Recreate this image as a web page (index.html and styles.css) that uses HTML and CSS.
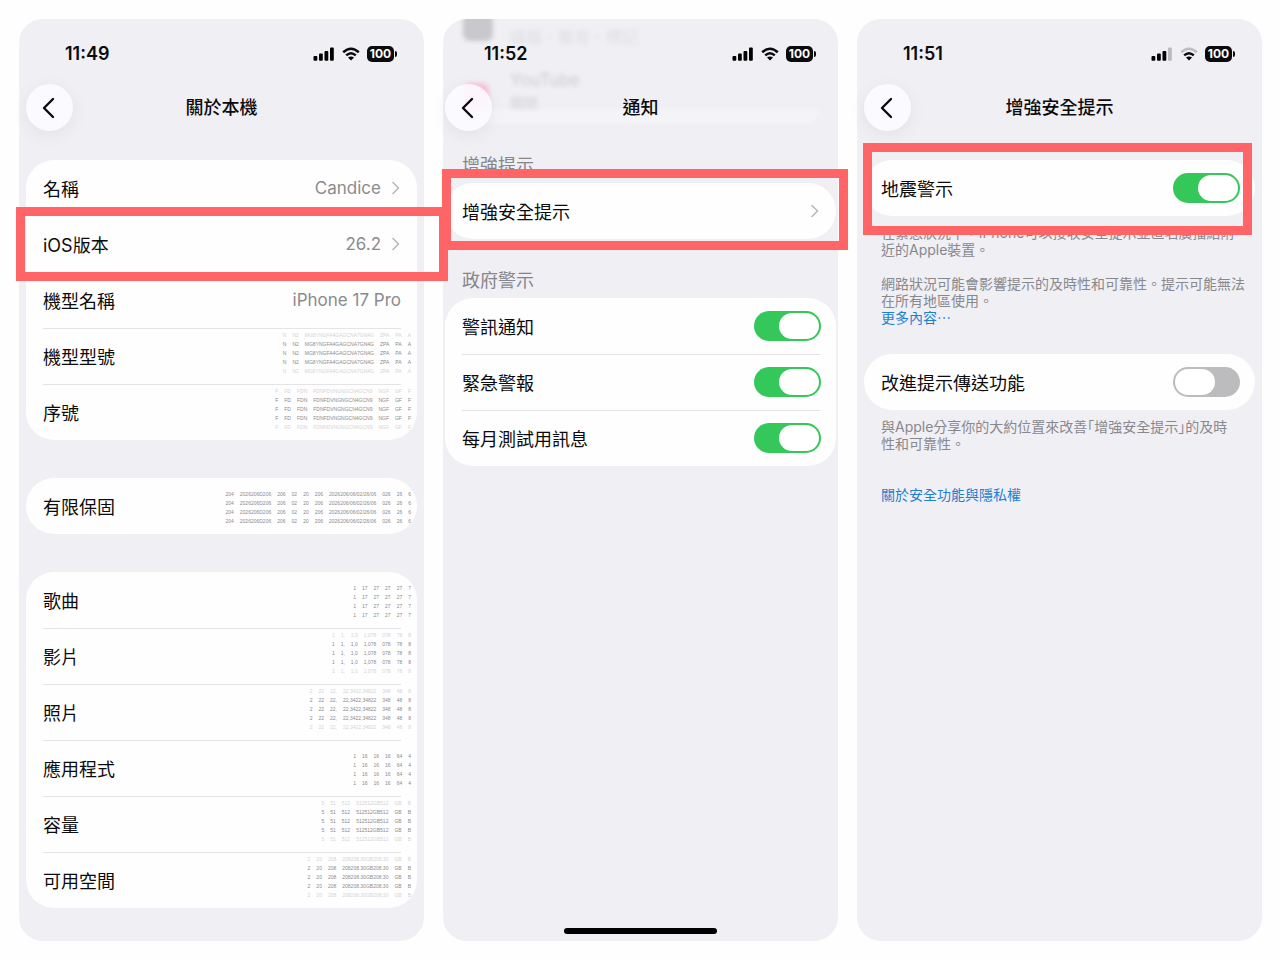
FILE: index.html
```html
<!DOCTYPE html>
<html lang="zh-Hant">
  <head>
    <meta charset="UTF-8" />
    <meta name="viewport" content="width=device-width, initial-scale=1.0" />
    <title>增強安全提示</title>
    <link rel="stylesheet" href="styles.css">
  </head>
  <body>
    <!-- shared icons -->
    <svg class="sprite" aria-hidden="true">
      <symbol id="back" viewBox="0 0 14 22">
        <path d="M12 2 L3 11 L12 20" fill="none" stroke="currentColor" stroke-width="2.4" stroke-linecap="round" stroke-linejoin="round" />
      </symbol>
      <symbol id="chevron" viewBox="0 0 8 14">
        <path d="M1 1.500 L6.500 7 L1 12.500" fill="none" stroke="currentColor" stroke-width="1.600" stroke-linecap="round" stroke-linejoin="round" />
      </symbol>
      <symbol id="signal" viewBox="0 0 22 14">
        <rect x="0.500" y="9" width="3.800" height="4.800" rx="1" />
        <rect x="6" y="6.500" width="3.800" height="7.300" rx="1" />
        <rect x="11.500" y="4" width="3.800" height="9.800" rx="1" />
        <rect x="17" y="0.500" width="3.800" height="13.300" rx="1" />
      </symbol>
      <symbol id="wifi" viewBox="0 0 18 14">
        <path d="M1.200 5.200 Q9 -1.800 16.800 5.200" fill="none" stroke="currentColor" stroke-width="2.500" />
        <path d="M4.200 8.400 Q9 4 13.800 8.400" fill="none" stroke="currentColor" stroke-width="2.500" />
        <path d="M9 13.600 L6 10.600 Q9 8.400 12 10.600 Z" />
      </symbol>
    </svg>

    <main class="screens">
      <section class="phone about">
        <div class="status-bar">
          <span class="time">11:49</span>
          <svg class="signal"><use href="#signal" /></svg>
          <svg class="wifi"><use href="#wifi" /></svg>
          <span class="battery">100</span>
        </div>
        <header class="nav">
          <button class="back" aria-label="返回"><svg><use href="#back" /></svg></button>
          <h1>關於本機</h1>
        </header>
        <div class="settings">
          <div class="card">
            <div class="row no-line">
              <span>名稱</span>
              <span class="value">Candice</span>
              <svg class="chevron"><use href="#chevron" /></svg>
            </div>
            <div class="row no-line">
              <span>iOS版本</span>
              <span class="value">26.2</span>
              <svg class="chevron"><use href="#chevron" /></svg>
              <div class="highlight"></div>
            </div>
            <div class="row">
              <span>機型名稱</span>
              <span class="value">iPhone 17 Pro</span>
            </div>
            <div class="row">
              <span>機型型號</span>
              <div class="masked"><i>N</i><i>N2</i><i>MG8YNGFA4GAGCNA7GN4G</i><i>ZPA</i><i>PA</i><i>A</i></div>
            </div>
            <div class="row">
              <span>序號</span>
              <div class="masked"><i>F</i><i>FD</i><i>FDN</i><i>FDNFDVNGNGCN4GCN9</i><i>NGF</i><i>GF</i><i>F</i></div>
            </div>
          </div>

          <div class="card">
            <div class="row">
              <span>有限保固</span>
              <div class="masked four"><i>204</i><i>2026206D206</i><i>206</i><i>02</i><i>20</i><i>206</i><i>2026206/06/02/26/06</i><i>026</i><i>26</i><i>6</i></div>
            </div>
          </div>

          <div class="card">
            <div class="row">
              <span>歌曲</span>
              <div class="masked four"><i>1</i><i>17</i><i>27</i><i>27</i><i>27</i><i>7</i></div>
            </div>
            <div class="row">
              <span>影片</span>
              <div class="masked"><i>1</i><i>1,</i><i>1,0</i><i>1,078</i><i>078</i><i>78</i><i>8</i></div>
            </div>
            <div class="row">
              <span>照片</span>
              <div class="masked"><i>2</i><i>22</i><i>22,</i><i>22,3422,34822</i><i>348</i><i>48</i><i>8</i></div>
            </div>
            <div class="row">
              <span>應用程式</span>
              <div class="masked four"><i>1</i><i>16</i><i>16</i><i>16</i><i>64</i><i>4</i></div>
            </div>
            <div class="row">
              <span>容量</span>
              <div class="masked"><i>5</i><i>51</i><i>512</i><i>512512GB512</i><i>GB</i><i>B</i></div>
            </div>
            <div class="row">
              <span>可用空間</span>
              <div class="masked"><i>2</i><i>20</i><i>208</i><i>208208.30GB208.30</i><i>GB</i><i>B</i></div>
            </div>
          </div>
        </div>
      </section>

      <section class="phone notifications">
        <!-- list scrolled under the navigation bar -->
        <div class="under" aria-hidden="true">
          <div class="app-icon"></div>
          <div class="app-icon pink"></div>
          <div class="list-end"></div>
          <p class="app-detail">橫幅、聲音、標記</p>
          <p class="app-name">YouTube</p>
          <p class="app-detail off">關閉</p>
        </div>
        <div class="status-bar">
          <span class="time">11:52</span>
          <svg class="signal"><use href="#signal" /></svg>
          <svg class="wifi"><use href="#wifi" /></svg>
          <span class="battery">100</span>
        </div>
        <header class="nav">
          <button class="back" aria-label="返回"><svg><use href="#back" /></svg></button>
          <h1>通知</h1>
        </header>
        <div class="settings">
          <h2>增強提示</h2>
          <div class="card">
            <div class="row">
              <span>增強安全提示</span>
              <svg class="chevron"><use href="#chevron" /></svg>
              <div class="highlight"></div>
            </div>
          </div>

          <h2>政府警示</h2>
          <div class="card">
            <div class="row">
              <label for="alert">警訊通知</label>
              <input type="checkbox" class="toggle" id="alert" checked />
            </div>
            <div class="row">
              <label for="emergency">緊急警報</label>
              <input type="checkbox" class="toggle" id="emergency" checked />
            </div>
            <div class="row">
              <label for="monthly">每月測試用訊息</label>
              <input type="checkbox" class="toggle" id="monthly" checked />
            </div>
          </div>
        </div>
        <div class="home-indicator"></div>
      </section>

      <section class="phone safety">
        <div class="status-bar weak">
          <span class="time">11:51</span>
          <svg class="signal" viewBox="0 0 22 14">
            <rect x="0.500" y="9" width="3.800" height="4.800" rx="1" />
            <rect x="6" y="6.500" width="3.800" height="7.300" rx="1" />
            <rect x="11.500" y="4" width="3.800" height="9.800" rx="1" />
            <rect class="outer" x="17" y="0.500" width="3.800" height="13.300" rx="1" />
          </svg>
          <svg class="wifi" viewBox="0 0 18 14">
            <path class="outer" d="M1.200 5.200 Q9 -1.800 16.800 5.200" fill="none" stroke="currentColor" stroke-width="2.500" />
            <path d="M4.200 8.400 Q9 4 13.800 8.400" fill="none" stroke="currentColor" stroke-width="2.500" />
            <path d="M9 13.600 L6 10.600 Q9 8.400 12 10.600 Z" />
          </svg>
          <span class="battery">100</span>
        </div>
        <header class="nav">
          <button class="back" aria-label="返回"><svg><use href="#back" /></svg></button>
          <h1>增強安全提示</h1>
        </header>
        <div class="settings">
          <div class="card">
            <div class="row">
              <label for="earthquake">地震警示</label>
              <input type="checkbox" class="toggle" id="earthquake" checked />
              <div class="highlight"></div>
            </div>
          </div>
          <div class="note">
            <p>在緊急狀況下，iPhone可以接收安全提示並匿名廣播給附<br />近的Apple裝置。</p>
            <p>網路狀況可能會影響提示的及時性和可靠性。提示可能無法<br />在所有地區使用。<br /><a href="#more">更多內容⋯</a></p>
          </div>

          <div class="card">
            <div class="row">
              <label for="improve">改進提示傳送功能</label>
              <input type="checkbox" class="toggle" id="improve" />
            </div>
          </div>
          <div class="note">
            <p>與Apple分享你的大約位置來改善<q>增強安全提示</q>的及時<br />性和可靠性。</p>
            <p class="privacy"><a href="#privacy">關於安全功能與隱私權</a></p>
          </div>
        </div>
      </section>
    </main>
  </body>
</html>
```

FILE: styles.css
```css
* {
  box-sizing: border-box;
}

body {
  margin: 0;
  background-color: #fefefe;
  color: #0b0b0d;
  font-family: Inter, "Noto Sans CJK TC", sans-serif;
  font-size: 18px;
}

h1,
h2,
p {
  margin: 0;
}

.sprite {
  display: none;
}

.screens {
  display: grid;
  grid-template-columns: 405fr 395fr 405fr;
  gap: 19px;
  min-height: 100vh;
  padding: 19px 18px 19px 19px;
}

.phone {
  --gutter: 7px;
  position: relative;
  display: flex;
  flex-direction: column;
  min-width: 0;
  background-color: #f0eff4;
  border-radius: 24px;
}

.notifications {
  --gutter: 2px;
}

/* Status bar */
.status-bar {
  position: relative;
  display: flex;
  align-items: center;
  gap: 7px;
  padding: 25px calc(var(--gutter) + 23px) 20px calc(var(--gutter) + 39px);
  line-height: 20px;
}

.time {
  margin-right: auto;
  font-weight: 600;
}

.signal {
  width: 22px;
  height: 14px;
}

.wifi {
  width: 18px;
  height: 14px;
}

.weak .outer {
  opacity: 0.22;
}

.battery {
  position: relative;
  width: 27px;
  height: 16px;
  border-radius: 5px;
  background-color: #0b0b0d;
  color: #fff;
  font-size: 12px;
  font-weight: 700;
  line-height: 16px;
  text-align: center;
}

.battery::after {
  content: "";
  position: absolute;
  top: 5px;
  right: -3px;
  width: 2px;
  height: 6px;
  border-radius: 0 2px 2px 0;
  background-color: #0b0b0d;
}

/* Navigation */
.nav {
  position: relative;
  display: grid;
  grid-template-columns: 47px 1fr 47px;
  align-items: center;
  padding: 0 var(--gutter);
}

.back {
  display: flex;
  align-items: center;
  justify-content: center;
  width: 47px;
  height: 47px;
  padding: 0 4px 0 0;
  border: none;
  border-radius: 50%;
  background-color: rgba(252, 251, 255, 0.9);
  box-shadow: 0 4px 18px rgba(0, 0, 0, 0.06);
  color: #0b0b0d;
  cursor: pointer;
}

.back svg {
  width: 14px;
  height: 22px;
}

h1 {
  font-size: 18px;
  font-weight: 500;
  line-height: 24px;
  text-align: center;
}

/* Lists */
.settings {
  display: flex;
  flex-direction: column;
  padding: 29px var(--gutter);
}

.notifications .settings {
  padding-top: 23px;
}

.card {
  border-radius: 28px;
  background-color: #fefefe;
}

.card + .card {
  margin-top: 38px;
}

.row {
  position: relative;
  display: flex;
  align-items: center;
  height: 56px;
  padding: 0 16px 0 17px;
}

.row:not(:last-child)::after {
  content: "";
  position: absolute;
  right: 16px;
  bottom: -1px;
  left: 17px;
  height: 1px;
  background-color: #e4e4e6;
}

.row.no-line::after {
  display: none;
}

.row > :first-child {
  margin-right: auto;
}

.value {
  color: #8b8b8e;
  font-size: 17px;
}

.chevron {
  width: 8px;
  height: 14px;
  margin-right: 1px;
  color: #b9b9bc;
}

.value + .chevron {
  margin-left: 11px;
}

h2 {
  margin: 30px 17px 5px;
  color: #85858a;
  font-size: 18px;
  font-weight: 400;
  line-height: 24px;
}

h2:first-child {
  margin-top: 0;
}

/* Private values, repeated and faded until unreadable */
.masked {
  display: flex;
  gap: 6px;
  margin: 0 -10px 6px 0;
  color: #8b8b8e;
  font-family: "Liberation Sans", sans-serif;
  font-size: 5px;
  line-height: 9px;
  text-shadow: 0 -9px #8b8b8e, 0 9px #8b8b8e, 0 -18px #d4d4d6, 0 18px #d4d4d6;
}

.masked.four {
  text-shadow: 0 -9px #8b8b8e, 0 9px #8b8b8e, 0 18px #8b8b8e;
}

.masked i {
  font-style: normal;
}

/* Switch */
.toggle {
  appearance: none;
  position: relative;
  width: 67px;
  height: 30px;
  margin: 0 -1px 0 0;
  border-radius: 15px;
  background-color: #bcbcbe;
  cursor: pointer;
}

.toggle::before {
  content: "";
  position: absolute;
  top: 2px;
  left: 2px;
  width: 40px;
  height: 26px;
  border-radius: 13px;
  background-color: #fff;
}

.toggle:checked {
  background-color: #34c759;
}

.toggle:checked::before {
  right: 2px;
  left: auto;
}

/* Red frames around the rows to tap */
.highlight {
  position: absolute;
  z-index: 2;
  border: 9px solid #ff6466;
  pointer-events: none;
}

.about .highlight {
  inset: -9px -31px -9px -10px;
}

.notifications .highlight {
  inset: -14px -12px -11px -3px;
}

.safety .highlight {
  inset: -17px 3px -19px -1px;
}

/* Descriptions */
.note {
  margin: 8px 0 28px;
  padding-left: 17px;
  color: #88888d;
  font-size: 14px;
  line-height: 17px;
  white-space: nowrap;
}

.note p + p {
  margin-top: 17px;
}

.note p + .privacy {
  margin-top: 34px;
}

q {
  quotes: "「" "」";
}

q::before,
q::after {
  font-feature-settings: "halt";
}

a {
  color: #1f7fd0;
  text-decoration: none;
}

/* Blurred content behind the bar */
.under {
  position: absolute;
  inset: 0 0 auto;
  height: 110px;
  border-radius: 24px 24px 0 0;
  overflow: hidden;
  color: #77777c;
}

.under > * {
  position: absolute;
  filter: blur(2px);
}

.app-icon {
  top: -8px;
  left: 20px;
  width: 30px;
  height: 30px;
  border-radius: 7px;
  background-color: #c9c9cd;
}

.app-icon.pink {
  top: 64px;
  left: 20px;
  width: 26px;
  background-color: #fbc4d8;
}

.list-end {
  top: 90px;
  right: 18px;
  left: 18px;
  height: 15px;
  border-radius: 0 0 15px 15px;
  background-color: #f4f3f8;
}

.app-name,
.app-detail {
  left: 67px;
  line-height: 20px;
}

.app-name {
  top: 51px;
  font-size: 17px;
  opacity: 0.3;
}

.app-detail {
  top: 8px;
  font-size: 16px;
  opacity: 0.14;
}

.app-detail.off {
  top: 74px;
  font-size: 14px;
  opacity: 0.25;
}

.home-indicator {
  width: 153px;
  height: 6px;
  margin: auto auto 7px;
  border-radius: 3px;
  background-color: #000;
}
```
